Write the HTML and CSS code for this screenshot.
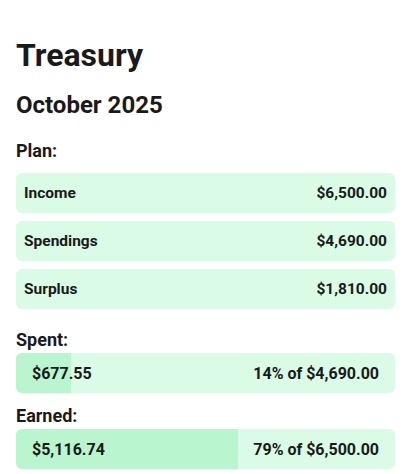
FILE: index.html
```html
<!DOCTYPE html>
<html lang="en">
<head>
<meta charset="utf-8">
<title>Treasury</title>
<link rel="stylesheet" href="styles.css">
</head>
<body>
<main class="page">
  <h1 class="title">Treasury</h1>
  <h2 class="month">October 2025</h2>

  <h3 class="label label-plan">Plan:</h3>
  <div class="plan">
    <div class="row"><span>Income</span><span>$6,500.00</span></div>
    <div class="row"><span>Spendings</span><span>$4,690.00</span></div>
    <div class="row"><span>Surplus</span><span>$1,810.00</span></div>
  </div>

  <h3 class="label label-spent">Spent:</h3>
  <div class="bar">
    <div class="fill" style="width: 14.45%"></div>
    <span class="bar-value">$677.55</span>
    <span class="bar-total">14% of $4,690.00</span>
  </div>

  <h3 class="label label-earned">Earned:</h3>
  <div class="bar">
    <div class="fill" style="width: 58.6%"></div>
    <span class="bar-value">$5,116.74</span>
    <span class="bar-total">79% of $6,500.00</span>
  </div>
</main>
</body>
</html>
```
FILE: styles.css
```css
* { box-sizing: border-box; }

html, body {
  margin: 0;
  padding: 0;
  background: #ffffff;
}

body {
  font-family: Roboto, "Liberation Sans", Arial, sans-serif;
  color: #1a1a1a;
}

.page {
  padding: 35px 16px 0 16px;
}

.title {
  margin: 0;
  font-size: 32px;
  line-height: 40px;
  font-weight: 700;
}

.month {
  margin: 14px 0 0 0;
  font-size: 24px;
  line-height: 32px;
  font-weight: 700;
}

.label {
  margin: 0;
  font-size: 18px;
  line-height: 24px;
  font-weight: 700;
}

.label-plan { margin-top: 18px; }
.label-spent { margin-top: 19px; }
.label-earned { margin-top: 11px; }

.plan {
  margin-top: 10px;
  display: flex;
  flex-direction: column;
  gap: 8px;
}

.row {
  height: 40px;
  border-radius: 6px;
  background: #dafbe6;
  display: flex;
  align-items: center;
  justify-content: space-between;
  padding: 0 8px;
  font-size: 15.5px;
  font-weight: 700;
}

.bar {
  position: relative;
  margin-top: 1px;
  height: 40px;
  border-radius: 6px;
  background: #dafbe6;
  overflow: hidden;
  display: flex;
  align-items: center;
  justify-content: space-between;
  padding: 0 16px;
  font-size: 16px;
  font-weight: 700;
}

.fill {
  position: absolute;
  left: 0;
  top: 0;
  bottom: 0;
  background: #b9f6cf;
}

.bar-value, .bar-total {
  position: relative;
}
```
